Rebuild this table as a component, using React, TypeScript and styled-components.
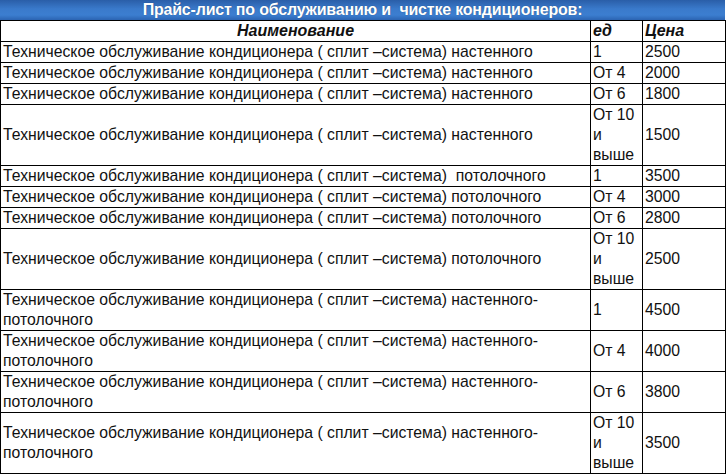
import React from 'react';
import styled, { createGlobalStyle } from 'styled-components';

const GlobalStyle = createGlobalStyle`
  html, body {
    margin: 0;
    padding: 0;
    background: #ffffff;
  }
  body {
    font-family: 'Liberation Sans', Arial, sans-serif;
    color: #111;
  }
`;

type Row = {
  name: string[];
  qty: string[];
  price: string;
};

const BASE = 'Техническое обслуживание кондиционера ( сплит –система)';

const rows: Row[] = [
  { name: [`${BASE} настенного`], qty: ['1'], price: '2500' },
  { name: [`${BASE} настенного`], qty: ['От 4'], price: '2000' },
  { name: [`${BASE} настенного`], qty: ['От 6'], price: '1800' },
  { name: [`${BASE} настенного`], qty: ['От 10', 'и', 'выше'], price: '1500' },
  { name: [`${BASE}  потолочного`], qty: ['1'], price: '3500' },
  { name: [`${BASE} потолочного`], qty: ['От 4'], price: '3000' },
  { name: [`${BASE} потолочного`], qty: ['От 6'], price: '2800' },
  { name: [`${BASE} потолочного`], qty: ['От 10', 'и', 'выше'], price: '2500' },
  { name: [`${BASE} настенного-`, 'потолочного'], qty: ['1'], price: '4500' },
  { name: [`${BASE} настенного-`, 'потолочного'], qty: ['От 4'], price: '4000' },
  { name: [`${BASE} настенного-`, 'потолочного'], qty: ['От 6'], price: '3800' },
  { name: [`${BASE} настенного-`, 'потолочного'], qty: ['От 10', 'и', 'выше'], price: '3500' },
];

const Sheet = styled.div`
  width: 725px;
`;

const TitleBar = styled.div`
  height: 20px;
  line-height: 20px;
  text-align: center;
  color: #ffffff;
  font-weight: bold;
  font-size: 16px;
  letter-spacing: -0.2px;
  text-shadow: 0 0 1px rgba(0, 0, 0, 0.4);
  background: linear-gradient(#2a5ea8 0%, #3a7acb 45%, #3c7ed0 75%, #2b64b2 100%);
`;

const Table = styled.table`
  width: 725px;
  border-collapse: collapse;
  table-layout: fixed;
  font-size: 15.75px;
  line-height: 20px;
`;

const HeadCell = styled.th<{ $center?: boolean }>`
  border: 1px solid #000;
  padding: 0 2px;
  height: 20px;
  font-weight: bold;
  font-style: italic;
  font-size: 16px;
  text-align: ${(p) => (p.$center ? 'center' : 'left')};
`;

const Cell = styled.td`
  border: 1px solid #000;
  padding: 0 2px;
  vertical-align: middle;
  white-space: pre;
  overflow: hidden;
`;

const Line = styled.div`
  height: 20px;
`;

export default function App() {
  return (
    <>
      <GlobalStyle />
      <Sheet>
        <TitleBar>Прайс-лист по обслуживанию и&nbsp; чистке кондиционеров:</TitleBar>
        <Table>
          <colgroup>
            <col style={{ width: 590 }} />
            <col style={{ width: 52 }} />
            <col style={{ width: 83 }} />
          </colgroup>
          <thead>
            <tr>
              <HeadCell $center>Наименование</HeadCell>
              <HeadCell>ед</HeadCell>
              <HeadCell>Цена</HeadCell>
            </tr>
          </thead>
          <tbody>
            {rows.map((r, i) => (
              <tr key={i}>
                <Cell>
                  {r.name.map((l, j) => (
                    <Line key={j}>{l}</Line>
                  ))}
                </Cell>
                <Cell>
                  {r.qty.map((l, j) => (
                    <Line key={j}>{l}</Line>
                  ))}
                </Cell>
                <Cell>{r.price}</Cell>
              </tr>
            ))}
          </tbody>
        </Table>
      </Sheet>
    </>
  );
}
